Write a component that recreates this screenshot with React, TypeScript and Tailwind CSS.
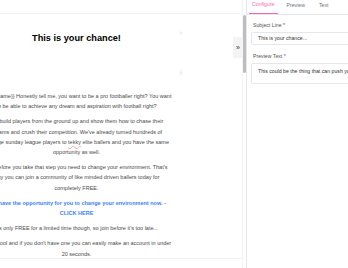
import { ArrowDownToLine, Plus } from "lucide-react";

const Para = ({ children, className = "" }: { children: React.ReactNode; className?: string }) => (
  <p className={`mt-[5px] text-center text-[5.5px] leading-[10.2px] text-[#4a4a4a] ${className}`}>{children}</p>
);

const EmailCanvas = () => {
  return (
    <div className="flex h-full w-[242px] flex-none flex-col">
      <div className="h-[14px] flex-none border-b border-gray-100" />
      <div className="flex flex-1 overflow-hidden">
        <div className="ml-[-19px] w-[191px] flex-none">
          <h1 className="mt-[18px] text-center text-[9.2px] font-bold leading-[12px] text-black">
            This is your chance!
          </h1>
          <div className="h-[42px]" />
          <Para>
            {"{{first_name}}"} Honestly tell me, you want to be a pro footballer right? You want to be able to
            achieve any dream and aspiration with football right?
          </Para>
          <Para>
            We build players from the ground up and show them how to chase their dreams and crush their
            competition. We've already turned hundreds of average sunday league players to{" "}
            <span className="underline decoration-red-300 decoration-wavy decoration-[0.5px]">tekky</span> elite
            ballers and you have the same opportunity as well.
          </Para>
          <Para>
            But before you take that step you need to change your environment. That's why you can join a
            community of like minded driven ballers today for completely FREE.
          </Para>
          <Para className="mt-[2px] font-bold !text-[#3b82f6]">
            You have the opportunity for you to change your environment now. - CLICK HERE
          </Para>
          <Para>It's only FREE for a limited time though, so join before it's too late...</Para>
          <Para>
            Join Skool and if you don't have one you can easily make an account in under 20 seconds.
          </Para>
        </div>
        <div className="ml-[1px] flex w-[16px] flex-none flex-col items-center pt-[16px] text-gray-300">
          <Plus size={6} strokeWidth={1.5} />
          <div className="h-[33px]" />
          <ArrowDownToLine size={6} strokeWidth={1.5} />
        </div>
      </div>
      <div className="h-[10px] flex-none border-t border-gray-100" />
    </div>
  );
};

const Field = ({ label, value, tall }: { label: string; value: string; tall?: boolean }) => (
  <div className="flex flex-col">
    <p className="pl-[2px] text-[5.2px] leading-[8px] text-[#555]">{label}</p>
    <div
      className={`mt-[3px] w-[200px] overflow-hidden rounded-[2px] border border-gray-200 px-[6px] text-[5.2px] text-[#333] ${
        tall ? "h-[21px] pt-[3px] leading-[8px]" : "h-[13px] leading-[11px]"
      }`}
    >
      {value}
    </div>
  </div>
);

export default function App() {
  return (
    <div className="relative flex h-[268px] w-[348px] overflow-hidden bg-white font-['Liberation_Sans',Arial,sans-serif]">
      <EmailCanvas />
      <div className="flex h-full w-[4px] flex-none flex-col border-l border-gray-100 pt-[15px]">
        <div className="h-[58px] w-[3px] rounded-full bg-[#bdbdbd]" />
      </div>
      <button className="absolute left-[233px] top-[37px] flex h-[21px] w-[10px] items-center justify-center bg-gray-100 text-[7px] leading-none text-[#333]">
        »
      </button>
      <div className="flex h-full w-[220px] flex-none flex-col border-l border-gray-200">
        <div className="flex h-[15px] flex-none items-end border-b border-gray-200 pl-[2px] text-[5.2px]">
          <div className="border-b border-pink-400 px-[3px] pb-[4px] text-pink-400">Configure</div>
          <div className="ml-[6px] px-[3px] pb-[4px] text-gray-500">Preview</div>
          <div className="ml-[8px] px-[3px] pb-[4px] text-gray-500">Text</div>
        </div>
        <div className="flex flex-col gap-[7px] pl-[4px] pt-[6px]">
          <Field label="Subject Line *" value="This is your chance..." />
          <Field label="Preview Text *" value="This could be the thing that can push you to the next level" tall />
        </div>
      </div>
    </div>
  );
}
